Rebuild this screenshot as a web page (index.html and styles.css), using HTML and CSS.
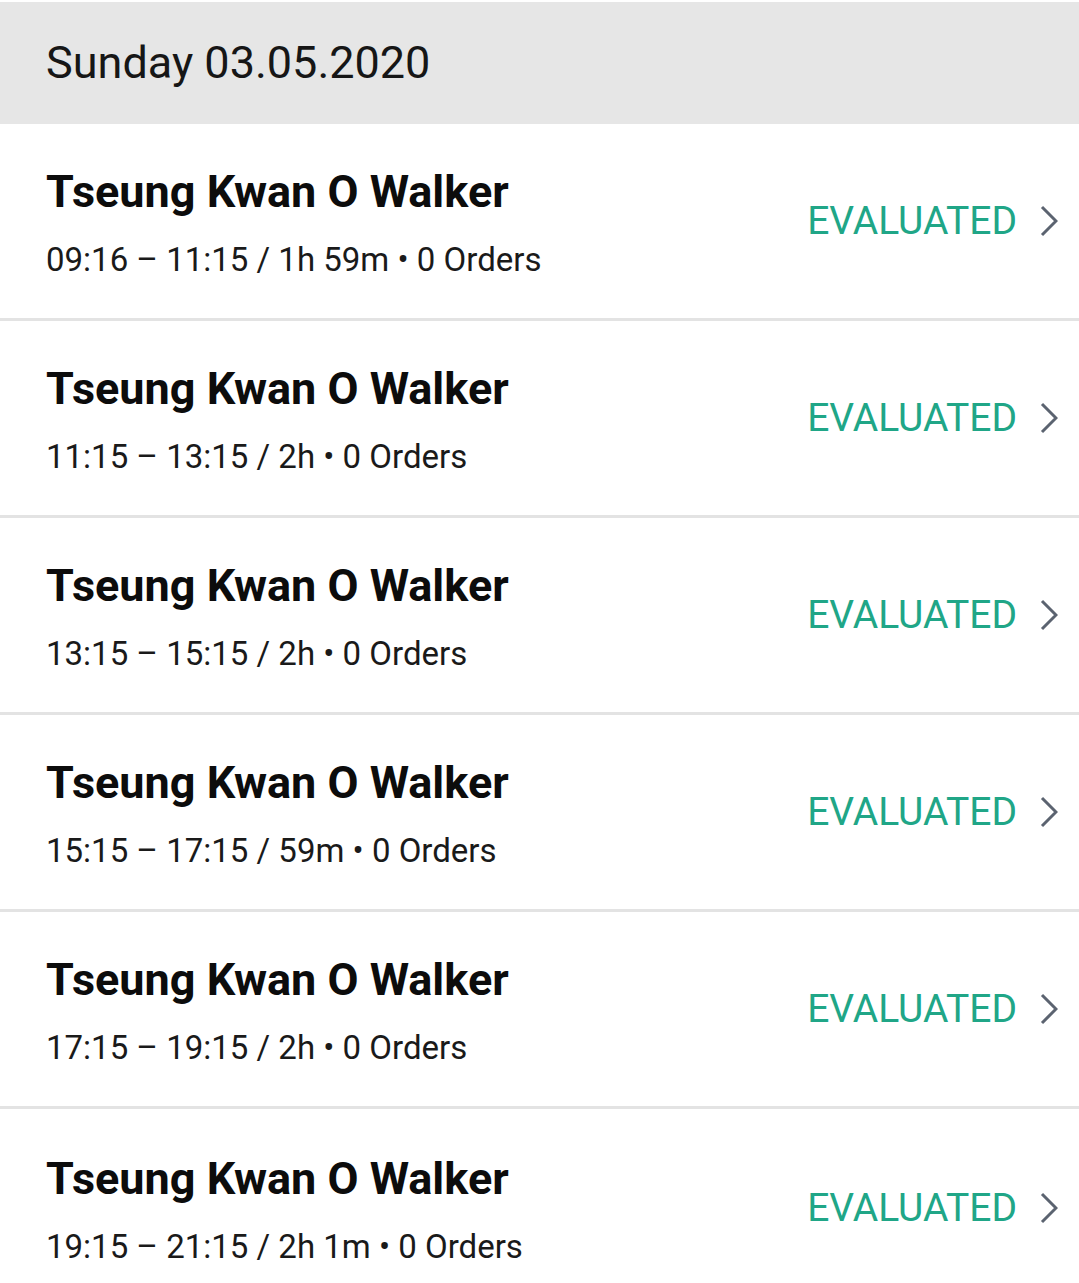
FILE: index.html
```html
<!DOCTYPE html>
<html>
    <head>
        <link rel="stylesheet" href="styles.css">
    </head>
    <body>
        <header class="day">Sunday 03.05.2020</header>

        <ul class="shifts">
            <li class="shift">
                <div class="info">
                    <h2>Tseung Kwan O Walker</h2>
                    <p>09:16 &ndash; 11:15 / 1h 59m &bull; 0 Orders</p>
                </div>
                <span class="status">EVALUATED</span>
                <svg class="chevron" viewBox="0 0 18 32"><path d="M2 2 L16 16 L2 30"/></svg>
            </li>
            <li class="shift">
                <div class="info">
                    <h2>Tseung Kwan O Walker</h2>
                    <p>11:15 &ndash; 13:15 / 2h &bull; 0 Orders</p>
                </div>
                <span class="status">EVALUATED</span>
                <svg class="chevron" viewBox="0 0 18 32"><path d="M2 2 L16 16 L2 30"/></svg>
            </li>
            <li class="shift">
                <div class="info">
                    <h2>Tseung Kwan O Walker</h2>
                    <p>13:15 &ndash; 15:15 / 2h &bull; 0 Orders</p>
                </div>
                <span class="status">EVALUATED</span>
                <svg class="chevron" viewBox="0 0 18 32"><path d="M2 2 L16 16 L2 30"/></svg>
            </li>
            <li class="shift">
                <div class="info">
                    <h2>Tseung Kwan O Walker</h2>
                    <p>15:15 &ndash; 17:15 / 59m &bull; 0 Orders</p>
                </div>
                <span class="status">EVALUATED</span>
                <svg class="chevron" viewBox="0 0 18 32"><path d="M2 2 L16 16 L2 30"/></svg>
            </li>
            <li class="shift">
                <div class="info">
                    <h2>Tseung Kwan O Walker</h2>
                    <p>17:15 &ndash; 19:15 / 2h &bull; 0 Orders</p>
                </div>
                <span class="status">EVALUATED</span>
                <svg class="chevron" viewBox="0 0 18 32"><path d="M2 2 L16 16 L2 30"/></svg>
            </li>
            <li class="shift">
                <div class="info">
                    <h2>Tseung Kwan O Walker</h2>
                    <p>19:15 &ndash; 21:15 / 2h 1m &bull; 0 Orders</p>
                </div>
                <span class="status">EVALUATED</span>
                <svg class="chevron" viewBox="0 0 18 32"><path d="M2 2 L16 16 L2 30"/></svg>
            </li>
        </ul>
    </body>
</html>
```

FILE: styles.css
```css
body {
    margin: 0;
    padding-top: 2px;
    background: #fff;
    font-family: Roboto, "Liberation Sans", sans-serif;
    color: #111;
}

.day {
    background-color: #e6e6e6;
    height: 122px;
    box-sizing: border-box;
    padding: 0 0 2px 46px;
    display: flex;
    align-items: center;
    font-size: 45px;
    color: #161616;
}

.shifts {
    list-style: none;
    margin: 0;
    padding: 0;
}

.shift {
    display: flex;
    align-items: center;
    height: 197px;
    box-sizing: border-box;
    padding: 0 21px 0 46px;
    border-bottom: 3px solid #e3e3e3;
}

.shift:last-child {
    border-bottom: none;
}

.info {
    flex: 1;
    padding-top: 2px;
}

.info h2 {
    margin: 0 0 22px 0;
    font-size: 45px;
    font-weight: bold;
    color: #0c0c0c;
}

.info p {
    margin: 0;
    font-size: 33px;
    color: #1a1a1a;
}

.status {
    color: #20a687;
    font-size: 39px;
    margin-right: 23px;
}

.chevron {
    width: 18px;
    height: 32px;
}

.chevron path {
    fill: none;
    stroke: #5b6370;
    stroke-width: 3;
}
```
